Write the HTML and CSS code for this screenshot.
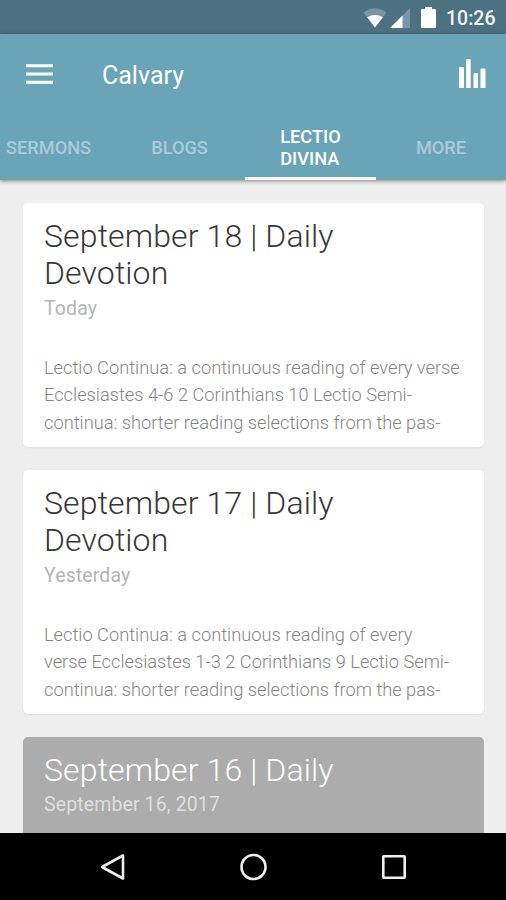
FILE: index.html
```html
<!DOCTYPE html>
<html lang="en">
<head>
<meta charset="utf-8">
<title>Calvary</title>
<link rel="stylesheet" href="styles.css">
</head>
<body>
<div class="phone">
  <div class="status">
    <svg class="wifi" width="26" height="20" viewBox="0 0 28 20" preserveAspectRatio="none"><path d="M1.500 4.500Q14-4 26.500 4.500L14 19.500Z" fill="#7896a3"/><path d="M5.500 9.300Q14 4.500 22.500 9.300L14 19.500Z" fill="#fff"/></svg>
    <svg class="signal" width="20" height="20" viewBox="0 0 20 20"><path d="M0 20L20 0V20Z" fill="#7896a3"/><path d="M0 20L12.500 7.500V20Z" fill="#fff"/></svg>
    <svg class="battery" width="15" height="21" viewBox="0 0 15 21"><path d="M4 0H11V2H14Q15 2 15 3V20Q15 21 14 21H1Q0 21 0 20V3Q0 2 1 2H4Z" fill="#fff"/></svg>
    <span class="clock">10:26</span>
  </div>
  <header class="header">
    <div class="toolbar">
      <svg class="menu" width="27" height="20" viewBox="0 0 27 20"><path d="M0 1.700H27M0 10H27M0 18.300H27" stroke="#fff" stroke-width="3"/></svg>
      <h1 class="brand">Calvary</h1>
      <svg class="chart" width="27" height="29" viewBox="0 0 27 29"><path d="M0 9Q0 8 1 8H4Q5 8 5 9V29H0ZM7.200 1Q7.200 0 8.200 0H10.700Q11.700 0 11.700 1V29H7.200ZM14.500 15Q14.500 14 15.500 14H18Q19 14 19 15V29H14.500ZM21.500 10.500Q21.500 9.500 22.500 9.500H25.500Q26.500 9.500 26.500 10.500V29H21.500Z" fill="#fff"/></svg>
    </div>
    <nav class="tabs">
      <a class="tab tab-first">SERMONS</a>
      <a class="tab">BLOGS</a>
      <a class="tab active">LECTIO<br>DIVINA</a>
      <a class="tab">MORE</a>
    </nav>
  </header>
  <main class="feed">
    <article class="card">
      <h2 class="title">September 18 | Daily<br>Devotion</h2>
      <p class="date">Today</p>
      <p class="excerpt">Lectio Continua: a continuous reading of every verse<br>Ecclesiastes 4-6 2 Corinthians 10 Lectio Semi-<br>continua: shorter reading selections from the pas-</p>
    </article>
    <article class="card">
      <h2 class="title">September 17 | Daily<br>Devotion</h2>
      <p class="date">Yesterday</p>
      <p class="excerpt">Lectio Continua: a continuous reading of every<br>verse Ecclesiastes 1-3 2 Corinthians 9 Lectio Semi-<br>continua: shorter reading selections from the pas-</p>
    </article>
    <article class="card muted">
      <h2 class="title">September 16 | Daily</h2>
      <p class="date">September 16, 2017</p>
    </article>
  </main>
  <footer class="navbar">
    <svg width="28" height="28" viewBox="0 0 28 28"><path d="M4 14L25 2.500V25.500Z"/></svg>
    <svg width="28" height="28" viewBox="0 0 28 28"><circle cx="14.500" cy="14" r="12"/></svg>
    <svg width="28" height="28" viewBox="0 0 28 28"><rect x="3.300" y="3.300" width="21.400" height="21.400" rx=".5"/></svg>
  </footer>
</div>
</body>
</html>
```
FILE: styles.css
```css
* { box-sizing: border-box; }
body { margin: 0; font-family: Roboto, "Liberation Sans", sans-serif; }
h1, h2, p { margin: 0; }
svg { display: block; flex: none; }
.phone { width: 506px; height: 900px; overflow: hidden; display: flex; flex-direction: column; background: #eee; }
.status { flex: none; height: 34px; background: #4c7282; display: flex; align-items: flex-start; justify-content: flex-end; padding-right: 11px; }
.wifi { margin: 8px 0 0; }
.signal { margin: 8px 0 0 2px; }
.battery { margin: 7px 0 0 11px; }
.clock { width: 49px; margin-left: 10px; line-height: 38px; font-size: 19.500px; font-weight: 500; color: #f2f6f8; white-space: nowrap; }
.header { flex: none; height: 146px; background: #6aa4b7; box-shadow: 0 1px 4px rgba(0,0,0,.45); position: relative; }
.toolbar { height: 80px; display: flex; align-items: center; padding: 0 20px 0 26px; }
.menu { margin-top: -1px; }
.brand { margin-left: 49px; margin-top: 3px; font-size: 25px; line-height: 32px; font-weight: 400; color: #fff; }
.chart { margin-left: auto; margin-top: -2px; }
.tabs { height: 66px; display: grid; grid-template-columns: 114px 131px 131px 130px; }
.tab { display: flex; align-items: center; justify-content: center; font-size: 18.200px; line-height: 22px; font-weight: 500; color: #a6cbdc; border-bottom: 3px solid transparent; padding-top: 4px; }
.tab-first { justify-content: flex-start; padding-left: 6px; }
.active { color: #fff; border-color: #fff; }
.feed { flex: 1; min-height: 0; overflow: hidden; padding: 23px 22px 0 23px; display: flex; flex-direction: column; gap: 23px; }
.card { flex: none; height: 244px; padding: 15px 0 0 21px; background: #fff; border-radius: 5px; box-shadow: 0 1px 2px rgba(0,0,0,.06); white-space: nowrap; }
.title { font-size: 32px; line-height: 37px; font-weight: 300; letter-spacing: .12px; color: #383838; }
.date { font-size: 19.500px; line-height: 24px; margin-top: 5px; letter-spacing: .12px; color: #b5b5b5; }
.excerpt { margin-top: 33px; font-size: 18.250px; line-height: 27.300px; font-weight: 300; color: #858585; }
.muted { background: #acacac; }
.muted .title { color: #fff; }
.muted .date { margin-top: 4px; color: #dedede; }
.navbar { flex: none; height: 67px; background: #000; display: flex; justify-content: center; gap: 113px; align-items: center; }
.navbar svg { fill: none; stroke: #eee; stroke-width: 2.600; stroke-linejoin: round; }
```
